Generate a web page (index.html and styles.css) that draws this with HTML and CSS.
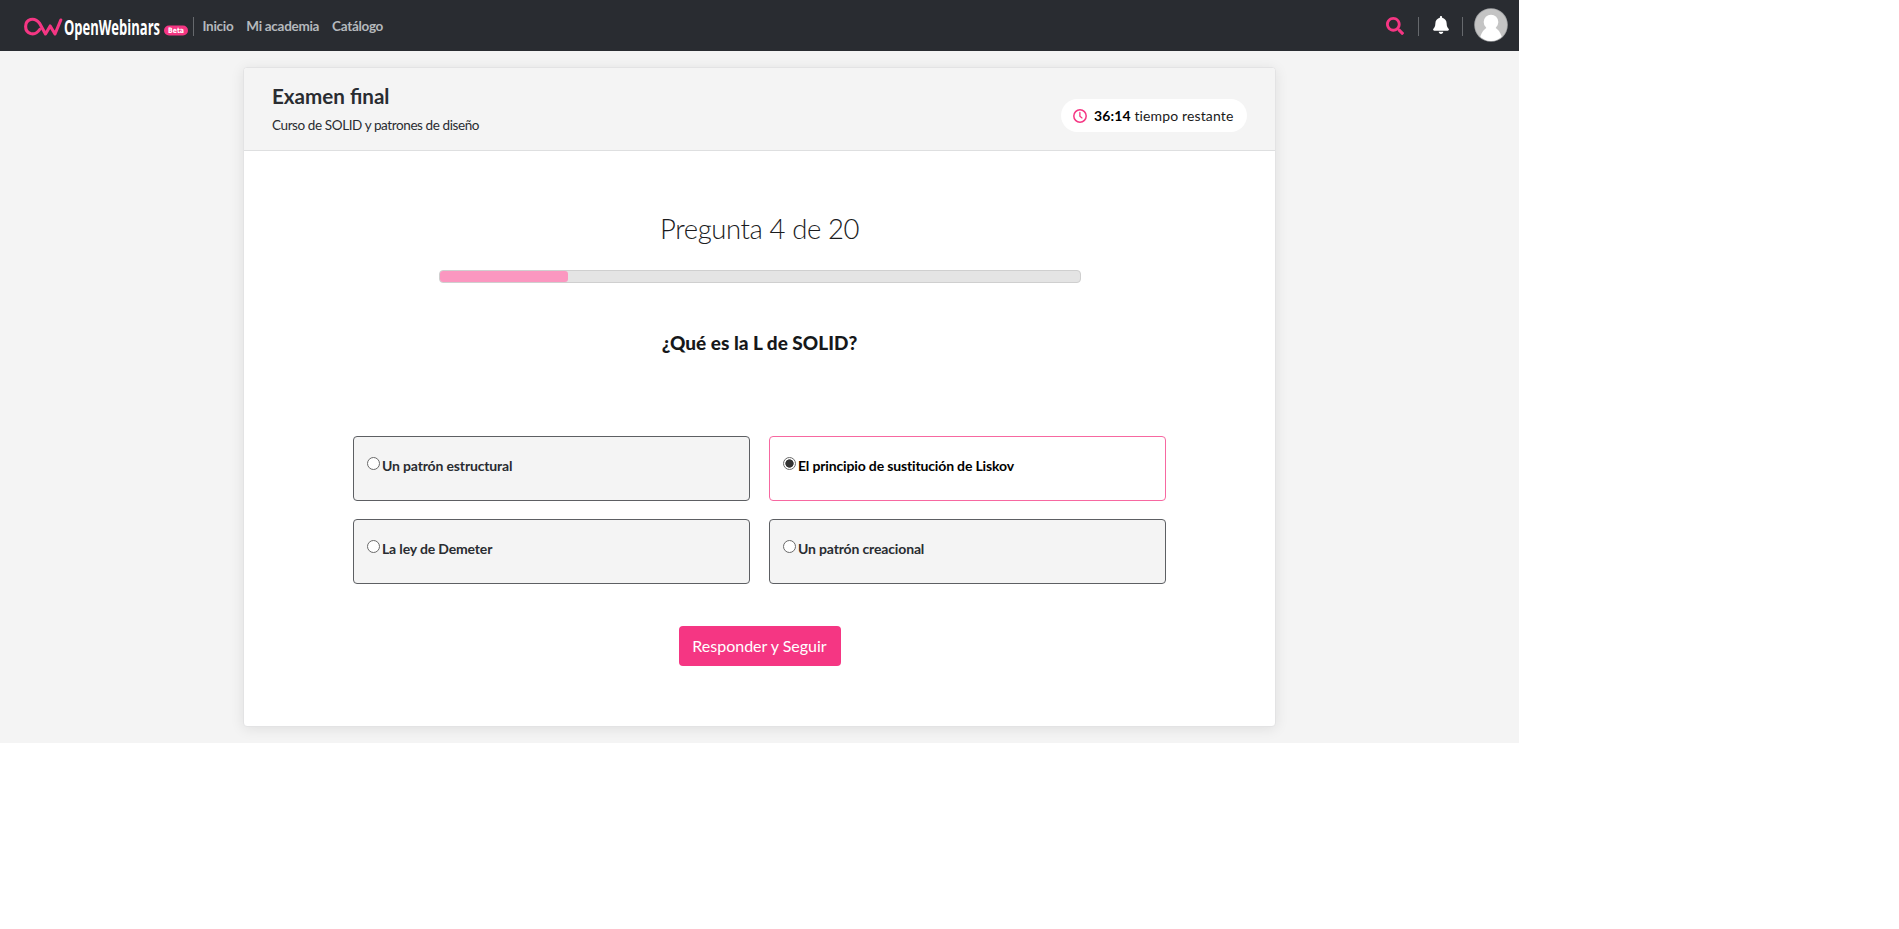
FILE: index.html
```html
<!DOCTYPE html>
<html lang="es">
<head>
<meta charset="utf-8">
<title>Examen final</title>
<link rel="stylesheet" href="styles.css">
</head>
<body>
<div class="page">
  <header class="nav">
    <svg class="logo" width="166" height="32" viewBox="0 0 166 32">
      <path d="M16.700 18.500C14 22.500 10.500 23.300 7.500 22.500C1 20.500 1 10.500 7.500 8.500C11.500 7.500 14.500 9.500 16.700 12.500L22.500 23L27.200 15L32 23L37.800 9" fill="none" stroke="#f53683" stroke-width="3.100" stroke-linecap="round" stroke-linejoin="round"/>
      <text class="logo-text" x="41" y="23.500" textLength="96" lengthAdjust="spacingAndGlyphs">OpenWebinars</text>
      <rect x="141" y="14.500" width="24" height="10" rx="5" fill="#f53683"/>
      <text class="logo-beta" x="145" y="22.300" textLength="16" lengthAdjust="spacingAndGlyphs">Beta</text>
    </svg>
    <span class="sep"></span>
    <nav class="links"><a>Inicio</a><a>Mi academia</a><a>Catálogo</a></nav>
    <div class="tools">
      <svg width="18" height="18" viewBox="0 0 512 512"><path fill="#f53683" d="M505 442.700L405.300 343c-4.500-4.500-10.600-7-17-7H372c27.600-35.300 44-79.700 44-128C416 93.100 322.900 0 208 0S0 93.100 0 208s93.100 208 208 208c48.300 0 92.700-16.400 128-44v16.300c0 6.400 2.500 12.500 7 17l99.700 99.700c9.400 9.400 24.600 9.400 33.900 0l28.300-28.300c9.400-9.400 9.400-24.600.1-34zM208 336c-70.700 0-128-57.200-128-128 0-70.700 57.200-128 128-128 70.700 0 128 57.200 128 128 0 70.700-57.200 128-128 128z"/></svg>
      <span class="sep"></span>
      <svg class="bell" width="16" height="18" viewBox="0 0 448 512"><path fill="#fff" d="M224 512c35.320 0 63.970-28.650 63.970-64H160.030c0 35.350 28.650 64 63.970 64zm215.390-149.710c-19.320-20.760-55.470-51.990-55.470-154.290 0-77.700-54.480-139.900-127.940-155.160V32c0-17.670-14.320-32-31.980-32s-31.980 14.330-31.980 32v20.840C118.560 68.100 64.080 130.300 64.080 208c0 102.300-36.150 133.530-55.470 154.290-6 6.450-8.660 14.160-8.610 21.710.11 16.400 12.980 32 32.100 32h383.800c19.120 0 32-15.600 32.100-32 .05-7.550-2.610-15.270-8.610-21.710z"/></svg>
      <span class="sep"></span>
      <svg class="avatar" width="34" height="34" viewBox="0 0 34 34"><clipPath id="c"><circle cx="17" cy="17" r="16"/></clipPath><circle cx="17" cy="17" r="16.800" fill="#a2a4a6"/><circle cx="17" cy="17" r="16" fill="#c4c4c4"/><g clip-path="url(#c)" fill="#fff"><circle cx="17" cy="14" r="7.300"/><path d="M5.500 36C5.500 25 10 21.500 13 19.500H21C24 21.500 28.500 25 28.500 36Z"/></g></svg>
    </div>
  </header>
  <main class="card">
    <div class="head">
      <div>
        <h1>Examen final</h1>
        <p>Curso de SOLID y patrones de diseño</p>
      </div>
      <div class="pill">
        <svg width="14" height="14" viewBox="0 0 14 14" fill="none" stroke="#f53683"><circle cx="7" cy="7" r="6.200" stroke-width="1.500"/><path d="M6.900 3.400V7.300L9 8.900" stroke-width="1.300" stroke-linecap="round"/></svg>
        <span><b>36:14</b> tiempo restante</span>
      </div>
    </div>
    <div class="body">
      <h2>Pregunta 4 de 20</h2>
      <div class="bar"><div class="fill" style="width:20%"></div></div>
      <h3>¿Qué es la L de SOLID?</h3>
      <div class="grid">
        <label class="opt"><i></i>Un patrón estructural</label>
        <label class="opt on"><i></i>El principio de sustitución de Liskov</label>
        <label class="opt"><i></i>La ley de Demeter</label>
        <label class="opt"><i></i>Un patrón creacional</label>
      </div>
      <button>Responder y Seguir</button>
    </div>
  </main>
</div>
</body>
</html>
```
FILE: styles.css
```css
* { box-sizing: border-box; }
body { margin: 0; background: #fff; font-family: Lato, sans-serif; color: #292c31; }
h1, h2, h3, p { margin: 0; }
.page { width: 1519px; height: 743px; background: #f4f4f4; }
.nav { height: 51px; background: #292c31; display: flex; align-items: center; padding: 0 11px 0 23px; }
.logo { margin-top: 3px; flex: none; overflow: visible; }
.logo-text { font: 700 20.5px "Open Sans", sans-serif; fill: #fff; }
.logo-beta { font: 700 7.5px "DejaVu Sans", sans-serif; fill: #fff; }
.sep { width: 1px; height: 19px; background: #66696d; margin-top: 2px; }
.nav > .sep { margin-left: 4px; }
.links { display: flex; gap: 13px; margin-left: 8.500px; font-size: 13.5px; font-weight: 700; letter-spacing: -.3px; line-height: 20px; color: #b5b9bd; margin-top: 1px; }
.tools { margin-left: auto; display: flex; align-items: center; }
.tools .sep { margin-left: 14px; margin-right: 14px; }
.bell { margin-top: -2px; }
.tools .sep:nth-of-type(2) { margin-left: 13px; margin-right: 11px; }
.avatar { margin-top: -1px; }
.card { width: 1033px; height: 660px; margin: 16px 0 0 243px; background: #fff; border: 1px solid #e3e3e4; border-radius: 4px; box-shadow: 0 2px 14px rgba(0,0,0,.09); }
.head { height: 83px; background: #f4f4f4; border-bottom: 1px solid #dedfe0; border-radius: 3px 3px 0 0; padding: 14px 28px 0; display: flex; justify-content: space-between; }
h1 { font-size: 20.6px; line-height: 28px; font-weight: 700; }
.head p { font-size: 13.5px; line-height: 20px; margin-top: 5px; letter-spacing: -.4px; }
.pill { height: 33px; width: 186px; margin-top: 17px; background: #fff; border-radius: 17px; display: flex; align-items: center; gap: 7px; padding-left: 12px; font-size: 14px; letter-spacing: .13px; color: #1a1a1a; white-space: nowrap; }
.pill b { color: #000; }
.body { display: flex; flex-direction: column; align-items: center; padding-top: 60px; }
h2 { font-size: 27.500px; letter-spacing: -.4px; font-weight: 300; line-height: 36px; color: #1b1c1e; }
.bar { width: 642px; height: 13px; margin-top: 23px; background: #e4e4e4; border: 1px solid #cfcfcf; border-radius: 4px; }
.fill { height: 11px; border-radius: 3px; background: #fb97c0; }
h3 { font-size: 19px; line-height: 26px; font-weight: 900; color: #16181a; margin-top: 47px; }
.grid { display: grid; grid-template-columns: 397px 397px; gap: 18px 19px; margin-top: 80px; }
.opt { height: 65px; border: 1px solid #5d5f63; border-radius: 4px; background: #f4f4f4; padding: 19px 13px; display: flex; gap: 2px; font-size: 14px; letter-spacing: -.15px; line-height: 20px; font-weight: 700; }
.opt i { width: 13px; height: 13px; border: 1px solid #6a6a6a; border-radius: 50%; background: #fff; margin-top: 1px; }
.on { background: #fff; border-color: #f768a1; color: #000; }
.on i { background: radial-gradient(circle, #333 3.8px, #fff 4.5px); }
button { width: 162px; height: 40px; margin-top: 42px; padding: 0 0 2px; border: 0; border-radius: 4px; background: #f53683; color: #fff; font: 16px Lato, sans-serif; }
```
